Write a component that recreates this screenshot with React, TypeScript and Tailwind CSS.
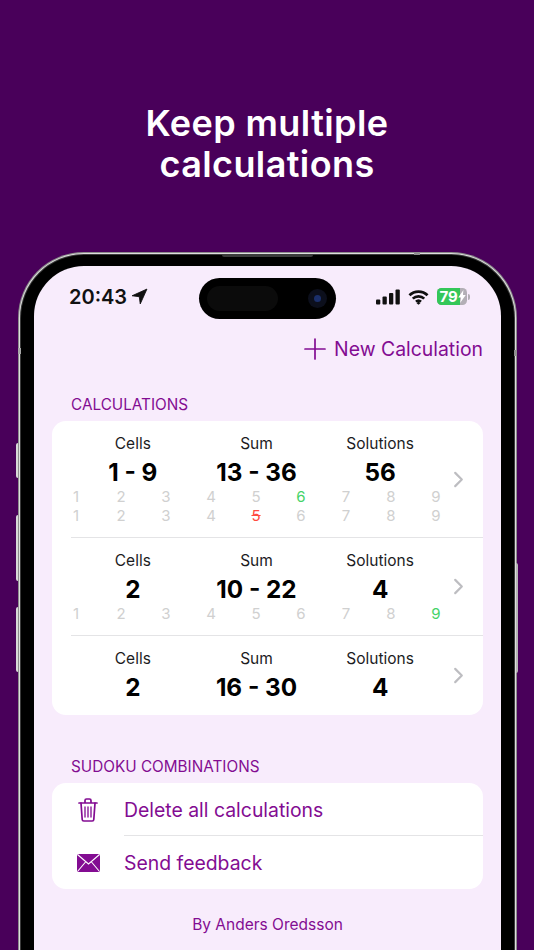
import React from "react";

const sans = "font-['Inter','Liberation_Sans',sans-serif]";

function Digits({ special }: { special?: Record<number, "green" | "red"> }) {
  return (
    <div className="grid w-[405px] grid-cols-9 ml-[1.5px] h-[19px] items-center text-[15px] leading-[19px] text-[#d0d0d0] text-center">
      {[1, 2, 3, 4, 5, 6, 7, 8, 9].map((n) => (
        <span
          key={n}
          className={
            special?.[n] === "green"
              ? "text-[#45d368]"
              : special?.[n] === "red"
              ? "text-[#ff4a40] line-through"
              : ""
          }
        >
          {n}
        </span>
      ))}
    </div>
  );
}

function Chevron({ className }: { className: string }) {
  return (
    <svg viewBox="0 0 11 18" className={"absolute left-[401px] w-[11px] h-[17px] " + className} fill="none" stroke="#bdbdc1" strokeWidth="2.3" strokeLinecap="round" strokeLinejoin="round">
      <path d="M2 2l7 7-7 7" />
    </svg>
  );
}

function Stats({ cells, sum, solutions }: { cells: string; sum: string; solutions: string }) {
  return (
    <div className="grid w-[371px] grid-cols-3 ml-[19px] text-black">
      {[
        ["Cells", cells],
        ["Sum", sum],
        ["Solutions", solutions],
      ].map(([a, b]) => (
        <div key={a} className="flex flex-col items-center">
          <span className="text-[15.5px] leading-[20px] text-[#1c1c1e]">{a}</span>
          <span className="mt-[3.5px] text-[24.3px] leading-[29px] font-bold">{b}</span>
        </div>
      ))}
    </div>
  );
}

export default function App() {
  return (
    <div className={"relative h-[950px] w-[534px] overflow-hidden bg-[#49005a] " + sans}>
      <h1 className="pt-[103px] h-[255px] text-center text-[36px] leading-[41px] font-semibold tracking-[0.4px] text-white font-['Inter',sans-serif]">
        Keep multiple
        <br />
        calculations
      </h1>

      {/* phone */}
      <div className="relative ml-[21px] h-[695px] w-[493px] rounded-t-[63px] bg-black px-[13px] pt-[11px] shadow-[0_0_0_1px_#3c3c3c,0_0_0_2px_#dedede,0_0_0_3px_#8c8c8c]">
        <div className="absolute left-[-5px] top-[188px] h-[35px] w-[2px] rounded-l bg-[#d8d8d8]" />
        <div className="absolute left-[-5px] top-[260px] h-[66px] w-[2px] rounded-l bg-[#d8d8d8]" />
        <div className="absolute left-[-5px] top-[352px] h-[65px] w-[2px] rounded-l bg-[#d8d8d8]" />
        <div className="absolute right-[-4px] top-[308px] h-[110px] w-[2px] rounded-r bg-[#b5b5b5]" />
        <div className="absolute left-[393px] top-[-3px] h-[3px] w-[6px] bg-[#8f8f8f]" />
        <div className="absolute left-[-3px] top-[93px] h-[6px] w-[3px] bg-[#a8a8a8]" />
        <div className="absolute right-[-3px] top-[95px] h-[6px] w-[3px] bg-[#8f8f8f]" />
        <div className="absolute left-[201px] top-0 h-[2px] w-[91px] rounded-b bg-[#3a3a3a]" />

        <div className="relative h-[684px] overflow-hidden rounded-t-[50px] bg-[#f8ecfc]">
          {/* island */}
          <div className="absolute left-[165px] top-[12px] flex h-[41px] w-[137px] items-center justify-between rounded-full bg-black pl-[8px] pr-[9px]">
            <div className="h-[25px] w-[71px] rounded-full bg-[#0b0b0b]" />
            <div className="flex h-[19px] w-[19px] items-center justify-center rounded-full bg-[#0c0f1c]">
              <div className="h-[7px] w-[7px] rounded-full bg-[#1b2f6a]" />
            </div>
          </div>

          {/* status bar */}
          <div className="flex h-[60px] items-center justify-between pl-[35px] pr-[31px] pt-[1px]">
            <div className="flex items-center gap-[4px]">
              <span className="text-[20px] font-semibold leading-[24px] text-[#111]">20:43</span>
              <svg viewBox="0 0 16 16" className="h-[17px] w-[17px]" fill="#111" stroke="#111" strokeWidth="0.8" strokeLinejoin="round">
                <path d="M15 1 1 7.300l6.800.9.900 6.800z" />
              </svg>
            </div>
            <div className="flex items-center gap-[5px]">
              <svg viewBox="0 0 24 15" className="h-[16px] w-[24px]" fill="#111">
                <rect x="0" y="10" width="4.300" height="5" rx="1" />
                <rect x="6.500" y="7" width="4.300" height="8" rx="1" />
                <rect x="13" y="3.500" width="4.300" height="11.500" rx="1" />
                <rect x="19.500" y="0" width="4.300" height="15" rx="1" />
              </svg>
              <svg viewBox="0 0 22 16" className="ml-[3px] h-[16px] w-[21px]" fill="none" stroke="#111" strokeWidth="2.800">
                <path d="M1.500 6.200a13.500 13.500 0 0 1 19 0" />
                <path d="M5 9.700a8.600 8.600 0 0 1 12 0" />
                <path d="M8.400 13a3.800 3.800 0 0 1 5.200 0" />
                <path d="M11 12.600l2 2-2 1.400-2-1.400z" fill="#111" stroke="none" />
              </svg>
              <div className="relative ml-[3px] flex h-[17px] w-[30px] items-center overflow-hidden rounded-[4.500px] bg-[#b3afb6]">
                <div className="h-full w-[23px] bg-[#34c759]" />
                <span className="absolute left-[2.500px] top-0 text-[15px] font-bold leading-[17px] text-white">79</span>
                <svg viewBox="0 0 8 14" className="absolute left-[21px] top-[2px] h-[13px] w-[8px]" fill="#fff">
                  <path d="M5.500 0 0 8h3l-1 6 6-8.500H5z" />
                </svg>
              </div>
              <div className="ml-[-4px] h-[6px] w-[2px] rounded-r bg-[#b3afb6]" />
            </div>
          </div>

          {/* new calculation */}
          <div className="mt-[9px] flex h-[28px] items-center justify-end gap-[8px] pr-[18px] text-[#830c92]">
            <svg viewBox="0 0 22 22" className="h-[22px] w-[22px]" fill="none" stroke="currentColor" strokeWidth="1.700" strokeLinecap="round">
              <path d="M11 1v20M1 11h20" />
            </svg>
            <span className="text-[19.400px] leading-[28px]">New Calculation</span>
          </div>

          <div className="mt-[32px] ml-[37px] h-[20px] text-[15.300px] leading-[20px] text-[#830c92]">CALCULATIONS</div>

          {/* card 1 */}
          <div className="relative ml-[18px] mt-[6px] h-[294px] w-[431px] rounded-[14px] bg-white">
            <div className="pt-[13px]">
              <Stats cells="1 - 9" sum="13 - 36" solutions="56" />
              <Digits special={{ 6: "green" }} />
              <Digits special={{ 5: "red" }} />
              <div className="ml-[19px] mt-[12.500px] h-px bg-[#e4e4e6]" />
            </div>
            <Chevron className="top-[50px]" />
            <div className="pt-[13px]">
              <Stats cells="2" sum="10 - 22" solutions="4" />
              <Digits special={{ 9: "green" }} />
              <div className="ml-[19px] mt-[12.500px] h-px bg-[#e4e4e6]" />
            </div>
            <Chevron className="top-[157px]" />
            <div className="pt-[13px]">
              <Stats cells="2" sum="16 - 30" solutions="4" />
            </div>
            <Chevron className="top-[246px]" />
          </div>

          <div className="mt-[42px] ml-[37px] h-[20px] text-[15.300px] leading-[20px] text-[#830c92]">SUDOKU COMBINATIONS</div>

          {/* card 2 */}
          <div className="ml-[18px] mt-[6px] h-[106px] w-[431px] rounded-[14px] bg-white text-[#830c92]">
            <div className="flex h-[52px] items-center pt-[2px]">
              <div className="flex w-[72px] justify-center">
                <svg viewBox="0 0 20 24" className="h-[24px] w-[20px]" fill="none" stroke="currentColor" strokeWidth="1.700" strokeLinecap="round" strokeLinejoin="round">
                  <path d="M1 5h18M7 5V2.500A1.500 1.500 0 0 1 8.500 1h3A1.500 1.500 0 0 1 13 2.500V5" />
                  <path d="M3 5l1.200 16.500A1.600 1.600 0 0 0 5.800 23h8.400a1.600 1.600 0 0 0 1.600-1.500L17 5" />
                  <path d="M7 9v10M10 9v10M13 9v10" strokeWidth="1.300" />
                </svg>
              </div>
              <span className="text-[19.400px] leading-[28px]">Delete all calculations</span>
            </div>
            <div className="ml-[72px] h-px bg-[#e4e4e6]" />
            <div className="flex h-[52px] items-center pt-[1px]">
              <div className="flex w-[72px] justify-center">
                <svg viewBox="0 0 23 18" className="h-[18px] w-[23px]">
                  <rect x="0" y="0" width="23" height="18" rx="1.500" fill="currentColor" />
                  <path d="M0.500 0.500 11.500 10 22.500 0.500M0.500 17.500 8.500 8M22.500 17.500 14.500 8" fill="none" stroke="#fff" strokeWidth="1.100" />
                </svg>
              </div>
              <span className="text-[19.400px] leading-[28px]">Send feedback</span>
            </div>
          </div>

          <div className="mt-[26px] text-center text-[15.500px] leading-[20px] text-[#830c92]">By Anders Oredsson</div>
        </div>
      </div>
    </div>
  );
}
